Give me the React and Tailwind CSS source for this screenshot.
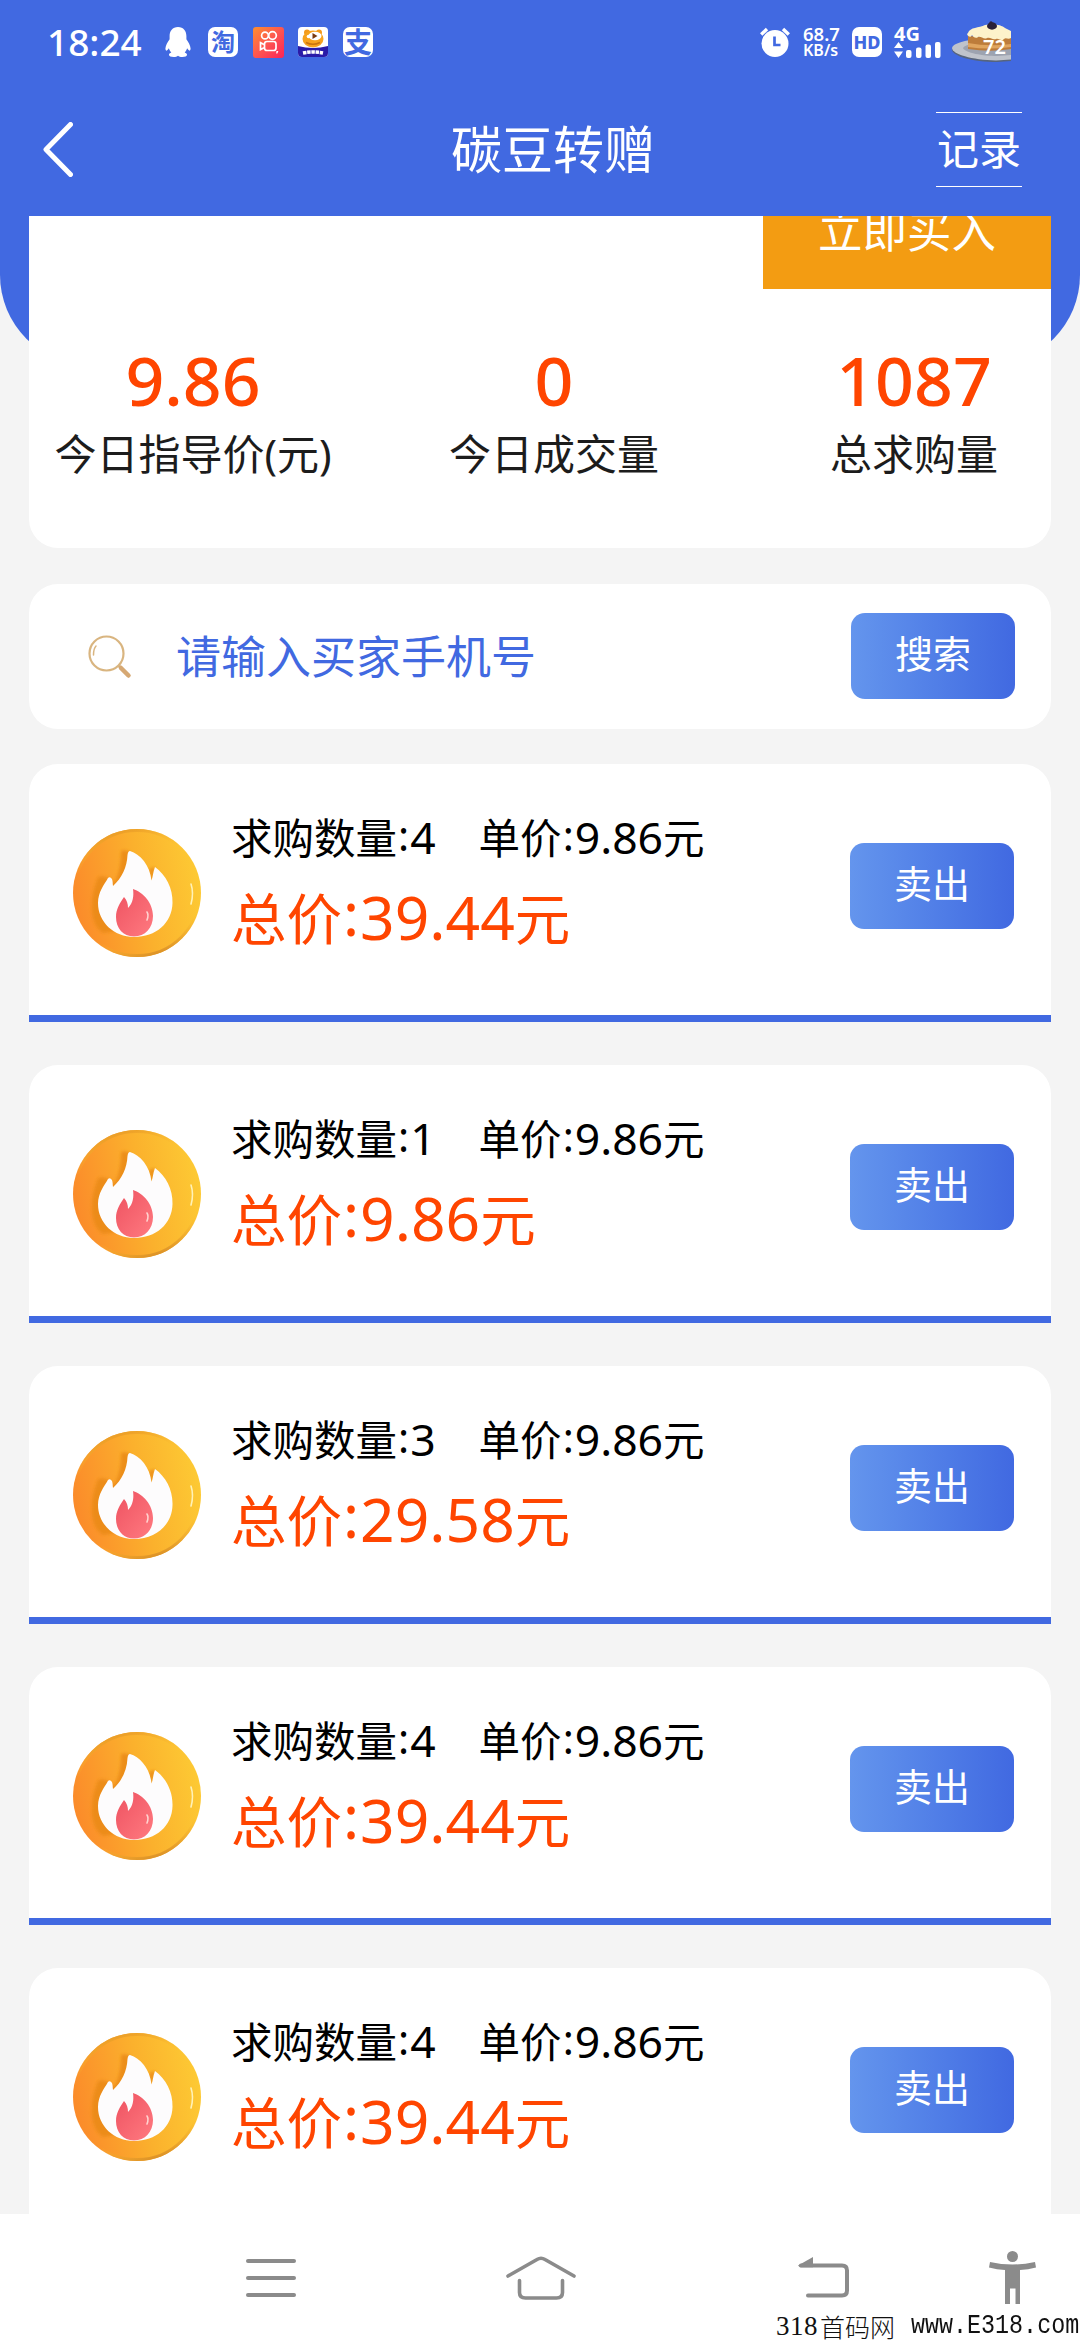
import React from 'react';

const ORDERS = [
  { id: 1, count: 4, price: '9.86', total: '39.44' },
  { id: 2, count: 1, price: '9.86', total: '9.86' },
  { id: 3, count: 3, price: '9.86', total: '29.58' },
  { id: 4, count: 4, price: '9.86', total: '39.44' },
  { id: 5, count: 4, price: '9.86', total: '39.44' },
];

/** App notification icons on the left of the status bar. */
function NotificationIcons() {
  return (
    <div className="flex h-[30px] items-center">
      <svg className="ml-6 h-[30px] w-[26px]" viewBox="0 0 26 30" fill="#fff">
        <path d="M13 0C7.500 0 4.600 4 4.600 9v3.200C2.600 15 .6 18.500 .4 21.500c0 1.500 .7 2.500 1.500 2 .8-.4 1.400-1.300 2-2.200.5 1.700 1.200 3 2.400 4.200-1.500.5-2.300 1.300-2.300 2.300 0 1.500 2 2.200 4.600 2.200 2 0 3.500-.4 4.400-1.200.9.800 2.400 1.200 4.400 1.200 2.600 0 4.600-.7 4.600-2.200 0-1-.8-1.800-2.300-2.300 1.200-1.200 1.900-2.500 2.400-4.200.6.900 1.200 1.800 2 2.200.8.500 1.500-.5 1.500-2-.2-3-2.200-6.500-4.200-9.300V9C21.400 4 18.500 0 13 0Z" />
      </svg>
      <div className="ml-[17px] flex size-[30px] items-center justify-center rounded-[7px] bg-white text-[24px] leading-[30px] font-bold text-[#4169e1]">
        淘
      </div>
      <svg className="ml-[15px] size-[31px]" viewBox="0 0 31 31">
        <defs>
          <linearGradient id="video" x1="0" y1="0" x2="1" y2="1">
            <stop offset="0" stopColor="#ff8f2e" />
            <stop offset="0.5" stopColor="#fd5650" />
            <stop offset="1" stopColor="#fb2358" />
          </linearGradient>
        </defs>
        <rect width="31" height="31" rx="3" fill="url(#video)" />
        <g fill="none" stroke="#fff" strokeWidth="1.700">
          <circle cx="12" cy="8.500" r="3.400" />
          <circle cx="19.500" cy="8.500" r="3.800" />
          <rect x="11.500" y="14.500" width="11.500" height="9" rx="2.500" />
          <path d="M11 17.500 7.500 15.700v6.800l3.500-1.800" />
        </g>
        <path d="m23.500 24 1.800 0-.9 2.600h-1.200z" fill="#fff" />
      </svg>
      <svg className="ml-[14px] size-[30px]" viewBox="0 0 30 30">
        <rect width="30" height="30" rx="4" fill="#fff" />
        <path d="M0 19q15 4 30 0v7a4 4 0 0 1-4 4H4a4 4 0 0 1-4-4z" fill="#2a1ba8" />
        <circle cx="9" cy="5.500" r="3" fill="#f39a1c" />
        <circle cx="21" cy="5.500" r="3" fill="#f39a1c" />
        <ellipse cx="15" cy="12" rx="10.500" ry="8.500" fill="#f6a21e" />
        <ellipse cx="17" cy="9" rx="6.500" ry="4.200" fill="#fff" />
        <circle cx="10.500" cy="9.500" r="1.800" fill="#fff" />
        <path d="m14.500 6 5 3-5 3z" fill="#7a3a10" />
        <path d="M8 15.500q7 3.500 14 0" stroke="#c9730f" strokeWidth="1.500" fill="none" />
        <path d="M5 26q10-2 20 0" stroke="#fff" strokeWidth="3.500" strokeDasharray="3.500 .7" fill="none" />
      </svg>
      <div className="ml-[15px] flex size-[30px] items-center justify-center rounded-[7px] bg-white text-[28px] leading-[30px] font-bold text-[#4169e1]">
        支
      </div>
    </div>
  );
}

function CakeBattery() {
  return (
    <div className="relative ml-[10px] h-[42px] w-[60px]">
      <svg className="size-full" viewBox="0 0 60 42">
        <path d="M60 19.500C35 16 3 20 1 28c-1 7 21 13 45 13l14-1z" fill="#56647e" />
        <path d="M60 19C35 16 3 19 1 27c0 6 20 12 44 12.500l15-1z" fill="#bfc3cb" />
        <path d="M60 23c-20-3-44-2-48 4 2 5 20 8 34 8l14-1z" fill="#9da3b0" />
        <path d="M17 15 60 17v11q-20 3.500-43 0z" fill="#bd7c3b" />
        <path d="M17 22q21 4 43 1v3q-22 3-43 0z" fill="#e0a560" />
        <path d="M17 12c2-6 11-5 17-8 8-2 17 0 20 3l6 3v7c-3 2-5-1-7 1-3 3-5-1-8 0-4 1-5-2-9-1-3 2-6-2-9-1-2 2-5 0-6-2-1 3-4 2-5-1z" fill="#fdf2cb" />
        <ellipse cx="41" cy="5" rx="5" ry="3.700" fill="#2b2036" />
        <circle cx="40" cy="2" r="1.700" fill="#2b2036" />
      </svg>
      <span className="absolute top-[16px] left-[32px] text-[20px] leading-[20px] font-semibold text-white">72</span>
    </div>
  );
}

function StatusBar() {
  return (
    <div className="flex h-[84px] items-center justify-between pr-[69px] pl-[47px] text-white">
      <div className="flex items-center">
        <span className="w-[94px] text-[37px] leading-[40px] font-medium whitespace-nowrap">18:24</span>
        <NotificationIcons />
      </div>
      <div className="flex items-center">
        <svg className="h-[31px] w-[30px]" viewBox="0 0 30 31">
          <circle cx="15" cy="16.500" r="13.500" fill="#fff" />
          <path d="M1.200 7.500 7 2M28.800 7.500 23 2" stroke="#fff" strokeWidth="3.400" />
          <path d="M14.500 9.500v8.500h6" stroke="#4169e1" strokeWidth="2.700" fill="none" />
        </svg>
        <div className="ml-[13px] w-[38px] font-semibold whitespace-nowrap">
          <div className="text-[18.500px] leading-[17px]">68.7</div>
          <div className="text-[16px] leading-[17px]">KB/s</div>
        </div>
        <div className="ml-[11px] flex size-[30px] items-center justify-center rounded-[7px] bg-white text-[18px] leading-[30px] font-extrabold text-[#4169e1]">
          HD
        </div>
        <div className="ml-3 h-[30px] w-[47px]">
          <div className="h-[15px] text-[20px] leading-[14px] font-bold">4G</div>
          <svg className="h-[17px] w-[47px]" viewBox="0 0 47 17" fill="#fff">
            <path d="M4.500 0 9 6H0zM4.500 16 9 9.500H0z" />
            <rect x="12" y="8" width="5.500" height="8" rx="2" />
            <rect x="22" y="5.500" width="5.500" height="10.500" rx="2" />
            <rect x="31.500" y="2.500" width="5.500" height="13.500" rx="2" />
            <rect x="41" y="0" width="5.500" height="16" rx="2" />
          </svg>
        </div>
        <CakeBattery />
      </div>
    </div>
  );
}

function TitleBar() {
  return (
    <div className="flex h-[132px] items-start justify-between pr-[58px] pl-[43px] text-white">
      <svg className="mt-[38px] h-[55px] w-[30px]" viewBox="0 0 30 55" fill="none">
        <path d="M27.500 2.500 3 27.500l24.500 25" stroke="#fff" strokeWidth="5" strokeLinecap="round" strokeLinejoin="round" />
      </svg>
      <h1 className="mt-[30px] ml-[97px] text-[51px] leading-[70px]">碳豆转赠</h1>
      <div className="mt-7 h-[75px] w-[86px] border-y-[1.500px] border-white text-center text-[42px] leading-[72px]">
        记录
      </div>
    </div>
  );
}

function Stat({ value, label, className = '' }) {
  return (
    <div className={`flex flex-col items-center whitespace-nowrap ${className}`}>
      <div className="text-[68px] leading-[80px] font-medium text-[#ff4500]">{value}</div>
      <div className="mt-1 text-[42px] leading-[60px] text-[#1c1c1c]">{label}</div>
    </div>
  );
}

function ActionButton({ children, className = '' }) {
  return (
    <button
      className={`h-[86px] w-[164px] rounded-[14px] bg-linear-to-r from-[#6495ed] to-[#4169e1] pb-[6px] text-[38px] leading-none text-white ${className}`}
    >
      {children}
    </button>
  );
}

function FireCoin() {
  return (
    <svg className="mt-[65px] size-32 shrink-0" viewBox="0 0 128 128">
      <defs>
        <linearGradient id="coin" x1="0" y1="0.600" x2="1" y2="0.400">
          <stop offset="0" stopColor="#fb8a2a" />
          <stop offset="0.550" stopColor="#fbb12d" />
          <stop offset="1" stopColor="#fdca34" />
        </linearGradient>
        <linearGradient id="coinEdge" x1="0.300" y1="0" x2="0.600" y2="1">
          <stop offset="0" stopColor="#e89a26" />
          <stop offset="0.250" stopColor="#fbb930" stopOpacity="0" />
          <stop offset="0.800" stopColor="#fbb930" stopOpacity="0" />
          <stop offset="1" stopColor="#dd9328" />
        </linearGradient>
        <linearGradient id="ember" x1="0" y1="0" x2="1" y2="1">
          <stop offset="0" stopColor="#ee5261" />
          <stop offset="1" stopColor="#ff7a80" />
        </linearGradient>
        <filter id="soft" x="-20%" y="-20%" width="140%" height="140%">
          <feGaussianBlur stdDeviation="1.800" />
        </filter>
      </defs>
      <circle cx="64" cy="64" r="64" fill="url(#coin)" />
      <circle cx="64" cy="64" r="62.500" fill="none" stroke="url(#coinEdge)" strokeWidth="3" />
      <path
        d="M48 22q6-2 10 2l14 24 6 6-2-14 6-2-10 60-42 6C20 98 18 84 19 74c0-10 3-17 6-26q6-2 12 2l4 4c5-8 7-20 7-32Z"
        fill="#ea8a18"
        opacity="0.850"
        filter="url(#soft)"
      />
      <path
        d="M57 22c10 3 20 14 21.500 29.500C80 48 80 43 82 38c11 8 18 21 17.500 36C99 94 83 108 61 108c-20 0-36-15-36-34 0-11 6-18 10-25q2-2 4 1c1 3 .5 4 1 7C49 49 54 38 54.500 26q.5-4 2.500-4Z"
        fill="#fdfcfd"
      />
      <path
        d="M60 60c10 3 20 14 20 27 0 12-8 20.500-19 20.500S43 99 43 88c0-8 4-14 8-20 3 3 4 7 4 11 5-5 6-12 5-19Z"
        fill="url(#ember)"
      />
      <path d="M74 83q2 3 0 8" stroke="#ffd3cf" strokeWidth="1.600" fill="none" strokeLinecap="round" />
      <path d="M118 55q3 9 0 20" stroke="#fff2b8" strokeWidth="1.600" fill="none" strokeLinecap="round" />
    </svg>
  );
}

function OrderCard({ order }) {
  return (
    <div className="flex h-[258px] shrink-0 items-start rounded-t-[29px] border-b-[7px] border-[#4169e1] bg-white pr-[37px] pl-11">
      <FireCoin />
      <div className="mt-[43px] ml-[30px] flex-1 whitespace-nowrap">
        <div className="flex h-[60px] gap-[43px] text-[41.500px] leading-[60px] text-black">
          <span>
            求购数量<span className="relative -top-[3px] mx-px">:</span>
            <span className="text-[44.500px]">{order.count}</span>
          </span>
          <span>
            单价<span className="relative -top-[3px] mx-px">:</span>
            <span className="text-[44.500px]">{order.price}</span>元
          </span>
        </div>
        <div className="mt-[10px] h-20 text-[55.500px] leading-[80px] text-[#ff4500]">
          总价<span className="relative -top-[4px] mx-px text-[60px]">:</span>
          <span className="text-[60.500px]">{order.total}</span>元
        </div>
      </div>
      <ActionButton className="mt-[79px]">卖出</ActionButton>
    </div>
  );
}

function SearchCard() {
  return (
    <div className="mt-9 flex h-[145px] shrink-0 items-center rounded-[29px] bg-white pr-9 pl-[59px]">
      <svg className="h-[44px] w-[44px]" viewBox="0 0 44 44" fill="none">
        <circle cx="18.500" cy="18.500" r="17" stroke="#d9b580" strokeWidth="2.200" />
        <path d="M5.500 20c0-4 .6-7 2.500-9" stroke="#d9b580" strokeWidth="1.500" strokeLinecap="round" />
        <path d="m30.500 30.500 2 2" stroke="#d9b580" strokeWidth="3" />
        <path d="m33 33 7.500 7.500" stroke="#d6a873" strokeWidth="4.500" strokeLinecap="round" />
      </svg>
      <span className="ml-11 flex-1 text-[45px] leading-[60px] text-[#4169e1]">请输入买家手机号</span>
      <ActionButton className="-mt-px">搜索</ActionButton>
    </div>
  );
}

function NavBar() {
  return (
    <nav className="flex h-[126px] shrink-0 flex-col bg-white">
      <div className="mt-[37px] flex h-[54px] items-center pl-[246px]">
        <div className="flex w-[50px] flex-col gap-[13px]">
          <div className="h-1 rounded-full bg-[#8b8b8b]" />
          <div className="h-1 rounded-full bg-[#8b8b8b]" />
          <div className="h-1 rounded-full bg-[#8b8b8b]" />
        </div>
        <svg className="ml-[210px] h-[44px] w-[70px]" viewBox="0 0 70 44" fill="none" stroke="#8b8b8b" strokeWidth="3.600" strokeLinecap="round">
          <path d="M2 20 31 3.500q4-2.500 8 0L68 20" />
          <path d="M13.500 24.500v12q0 5.500 6 5.500h31q6 0 6-5.500v-12" />
        </svg>
        <svg className="ml-[222px] h-[42px] w-[52px]" viewBox="0 0 52 42" fill="none">
          <path d="M3 8.500h41q5 0 5 5v20q0 5-5 5H10" stroke="#8b8b8b" strokeWidth="4" strokeLinecap="round" />
          <path d="M0 8.500 15 0v10.300H2z" fill="#8b8b8b" />
        </svg>
        <svg className="ml-[139px] h-[54px] w-[47px]" viewBox="0 0 47 54" fill="#8b8b8b">
          <circle cx="23.500" cy="5.500" r="5.500" />
          <path d="M1 11q22.500 5 45 0l1 5.500q-8 2-16 2.500V53H26.500V37.500h-5.500V53H16V19Q8 18.500 0 16.500z" />
        </svg>
      </div>
      <div className="mt-[7px] flex h-7 items-center pl-[776px] leading-[26px] whitespace-nowrap text-[#111]">
        <span className="w-11 shrink-0 font-['Liberation_Serif'] text-[27px] tracking-[.5px]">318</span>
        <span className="w-[91px] shrink-0 font-['Noto_Sans_CJK_SC'] text-[25px] leading-[24px] font-light">首码网</span>
        <span className="w-[169px] shrink-0 origin-left scale-x-[.865] font-['Liberation_Mono'] text-[27px]">www.E318.com</span>
      </div>
    </nav>
  );
}

export default function App() {
  return (
    <div className="flex h-[2340px] w-[1080px] flex-col overflow-hidden bg-[#f4f4f4] font-['Noto_Sans','Noto_Sans_CJK_SC',sans-serif]">
      <header className="h-[216px] shrink-0 bg-[#4169e1]">
        <StatusBar />
        <TitleBar />
      </header>
      <main className="flex min-h-0 flex-1 flex-col overflow-hidden">
        {/* rounded end of the blue backdrop, the first card sits on top of it */}
        <div className="h-[149px] shrink-0 rounded-b-[90px] bg-[#4169e1]" />
        <div className="-mt-[149px] flex flex-col px-[29px]">
          <section className="h-[332px] shrink-0 rounded-b-[29px] bg-white">
            <div className="ml-auto h-[73px] w-72 overflow-hidden bg-[#f39c12] text-center text-[44.500px] text-white">
              <div className="-mt-[15px] leading-[60px]">立即买入</div>
            </div>
            <div className="mt-[51px] grid grid-cols-[328px_394px_1fr]">
              <Stat value="9.86" label="今日指导价(元)" />
              <Stat value="0" label="今日成交量" />
              <Stat value="1087" label="总求购量" className="pl-[26px]" />
            </div>
          </section>
          <SearchCard />
          <div className="mt-[35px] flex flex-col gap-[43px]">
            {ORDERS.map((order) => (
              <OrderCard key={order.id} order={order} />
            ))}
          </div>
        </div>
      </main>
      <NavBar />
    </div>
  );
}
